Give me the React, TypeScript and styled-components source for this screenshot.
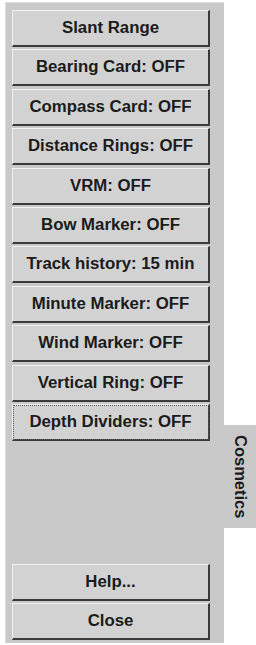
import React from 'react'
import styled, { createGlobalStyle } from 'styled-components'

const GlobalStyle = createGlobalStyle`
  html, body {
    margin: 0;
    padding: 0;
    background: #ffffff;
  }
`

const toggles = [
  'Slant Range',
  'Bearing Card: OFF',
  'Compass Card: OFF',
  'Distance Rings: OFF',
  'VRM: OFF',
  'Bow Marker: OFF',
  'Track history: 15 min',
  'Minute Marker: OFF',
  'Wind Marker: OFF',
  'Vertical Ring: OFF',
  'Depth Dividers: OFF'
]

export default function App(): React.JSX.Element {
  return (
    <>
      <GlobalStyle />
      <Screen>
        <Panel>
          <ButtonList>
            {toggles.map((label, i) => (
              <PanelButton key={label} $focused={i === toggles.length - 1}>
                {label}
              </PanelButton>
            ))}
          </ButtonList>
          <ButtonList>
            <PanelButton>Help...</PanelButton>
            <PanelButton>Close</PanelButton>
          </ButtonList>
        </Panel>
        <TabColumn>
          <Tab>Cosmetics</Tab>
        </TabColumn>
      </Screen>
    </>
  )
}

const Screen = styled.div`
  display: flex;
  width: 256px;
  height: 645px;
  padding: 2px 0 0 5px;
  box-sizing: border-box;
  overflow: hidden;
  font-family: 'Liberation Sans', Arial, sans-serif;
`

const Panel = styled.div`
  display: flex;
  flex-direction: column;
  justify-content: space-between;
  width: 219px;
  height: 641px;
  box-sizing: border-box;
  padding: 7px 14px 3px 6px;
  background: #c9c9c9;
  border-left: 1px solid #dedede;
  border-top: 1px solid #dcdcdc;
`

const ButtonList = styled.div`
  display: flex;
  flex-direction: column;
  gap: 2.4px;
`

const PanelButton = styled.div<{ $focused?: boolean }>`
  display: flex;
  align-items: center;
  justify-content: center;
  height: 37px;
  box-sizing: border-box;
  background: #d2d2d2;
  border-top: 1px solid #f2f2f2;
  border-left: 1px solid #efefef;
  border-right: 2px solid #3a3a3a;
  border-bottom: 2px solid #3a3a3a;
  color: #1b1b1b;
  font-size: 16.8px;
  font-weight: 700;
  white-space: nowrap;
  outline: ${(p) => (p.$focused ? '1px dotted #555' : 'none')};
  outline-offset: -2px;
`

const TabColumn = styled.div`
  display: flex;
  flex-direction: column;
  padding-top: 423px;
`

const Tab = styled.div`
  display: flex;
  align-items: center;
  justify-content: center;
  width: 32px;
  height: 103px;
  background: #c9c9c9;
  writing-mode: vertical-rl;
  color: #1b1b1b;
  font-size: 16.5px;
  font-weight: 700;
`
